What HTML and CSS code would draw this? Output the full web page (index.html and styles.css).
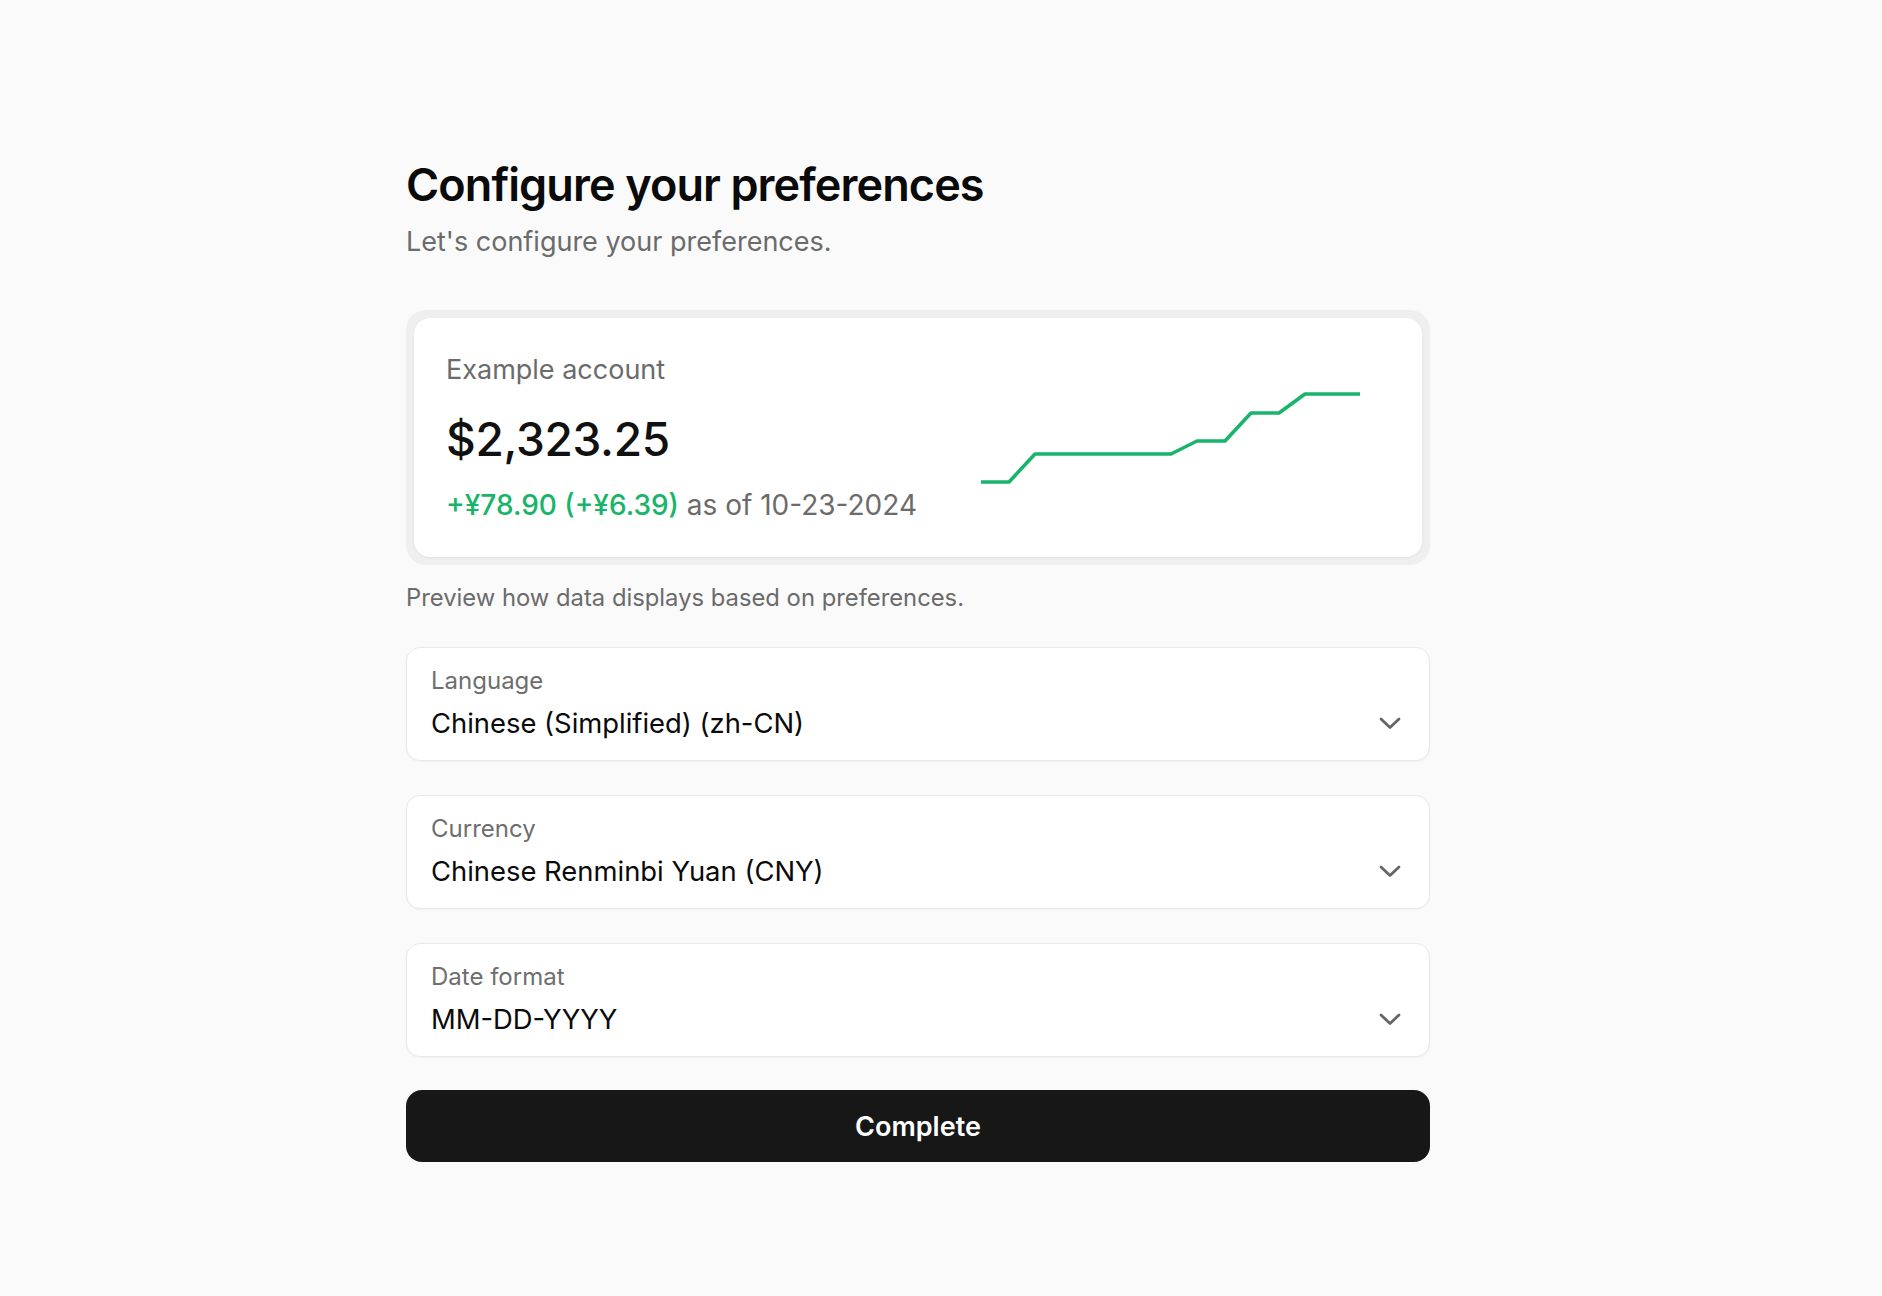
FILE: index.html
```html
<!DOCTYPE html>
<html lang="en">
<head>
<meta charset="utf-8">
<title>Configure your preferences</title>
<link rel="stylesheet" href="styles.css">
</head>
<body>
<main class="page">
  <section class="wrap">
    <h1 class="title">Configure your preferences</h1>
    <p class="subtitle">Let's configure your preferences.</p>

    <div class="preview-frame">
      <div class="preview-card">
        <div class="account">
          <div class="account-name">Example account</div>
          <div class="account-balance">$2,323.25</div>
          <div class="account-change"><span class="up">+¥78.90 (+¥6.39)</span> as of 10-23-2024</div>
        </div>
        <svg class="chart" width="380" height="96" viewBox="0 0 380 96" aria-hidden="true">
          <path d="M0 92 L28 92 L54 64 L190 64 L216 51 L244 51 L270 23 L298 23 L324 4 L379 4" fill="none" stroke="#17b46a" stroke-width="3.6" stroke-linejoin="round"/>
        </svg>
      </div>
    </div>
    <p class="preview-note">Preview how data displays based on preferences.</p>

    <div class="fields">
      <div class="field">
        <div class="field-label">Language</div>
        <div class="field-row">
          <span class="field-value">Chinese (Simplified) (zh-CN)</span>
          <svg class="chev" width="22" height="13" viewBox="0 0 22 13" aria-hidden="true"><path d="M2 2 L11 10.5 L20 2" fill="none" stroke="#666" stroke-width="2.8" stroke-linecap="round" stroke-linejoin="round"/></svg>
        </div>
      </div>
      <div class="field">
        <div class="field-label">Currency</div>
        <div class="field-row">
          <span class="field-value">Chinese Renminbi Yuan (CNY)</span>
          <svg class="chev" width="22" height="13" viewBox="0 0 22 13" aria-hidden="true"><path d="M2 2 L11 10.5 L20 2" fill="none" stroke="#666" stroke-width="2.8" stroke-linecap="round" stroke-linejoin="round"/></svg>
        </div>
      </div>
      <div class="field">
        <div class="field-label">Date format</div>
        <div class="field-row">
          <span class="field-value">MM-DD-YYYY</span>
          <svg class="chev" width="22" height="13" viewBox="0 0 22 13" aria-hidden="true"><path d="M2 2 L11 10.5 L20 2" fill="none" stroke="#666" stroke-width="2.8" stroke-linecap="round" stroke-linejoin="round"/></svg>
        </div>
      </div>
      <button class="complete" type="button">Complete</button>
    </div>
  </section>
</main>
</body>
</html>
```

FILE: styles.css
```css
* { box-sizing: border-box; }

html, body {
  margin: 0;
  padding: 0;
  background: #fafafa;
  font-family: Inter, "Noto Sans", "Liberation Sans", sans-serif;
  color: #0a0a0a;
}

.page {
  padding: 158px 0 120px 406px;
}

.wrap {
  width: 1024px;
  display: flex;
  flex-direction: column;
}

.title {
  margin: 0;
  font-size: 45px;
  line-height: 54px;
  font-weight: 600;
  letter-spacing: -0.9px;
  color: #0a0a0a;
}

.subtitle {
  margin: 11px 0 0;
  font-size: 27px;
  line-height: 38px;
  color: #6b6b6b;
}

.preview-frame {
  margin-top: 49px;
  background: #efefef;
  border-radius: 20px;
  padding: 8px;
}

.preview-card {
  background: #ffffff;
  border-radius: 16px;
  padding: 33px 30px 33px 32px;
  display: flex;
  align-items: center;
  box-shadow: 0 1px 3px rgba(0, 0, 0, 0.06);
}

.account {
  display: flex;
  flex-direction: column;
}

.account-name {
  font-size: 27px;
  line-height: 38px;
  color: #6b6b6b;
}

.account-balance {
  margin-top: 22px;
  font-size: 46px;
  line-height: 56px;
  font-weight: 500;
  color: #111;
  letter-spacing: -0.3px;
}

.account-change {
  margin-top: 19px;
  font-size: 28px;
  line-height: 38px;
  color: #6b6b6b;
}

.up {
  color: #17b46a;
  font-weight: 500;
}

.chart {
  margin-left: auto;
  margin-right: 31px;
  display: block;
}

.preview-note {
  margin: 16px 0 0;
  font-size: 23.8px;
  line-height: 34px;
  color: #6b6b6b;
}

.fields {
  margin-top: 32px;
  display: flex;
  flex-direction: column;
  gap: 34px;
}

.field {
  background: #ffffff;
  border: 1px solid #e9e9e9;
  border-radius: 14px;
  padding: 16px 28px 18px 24px;
  box-shadow: 0 1px 2px rgba(0, 0, 0, 0.04);
}

.field-label {
  font-size: 24px;
  line-height: 34px;
  color: #6e6e6e;
}

.field-row {
  margin-top: 6px;
  display: flex;
  align-items: center;
  justify-content: space-between;
}

.field-value {
  font-size: 27.4px;
  line-height: 38px;
  color: #0a0a0a;
}

.chev { display: block; }

.complete {
  margin-top: -1px;
  height: 72px;
  border: 0;
  border-radius: 16px;
  background: #171717;
  color: #ffffff;
  font-family: inherit;
  font-size: 27px;
  font-weight: 600;
  cursor: pointer;
}
```
